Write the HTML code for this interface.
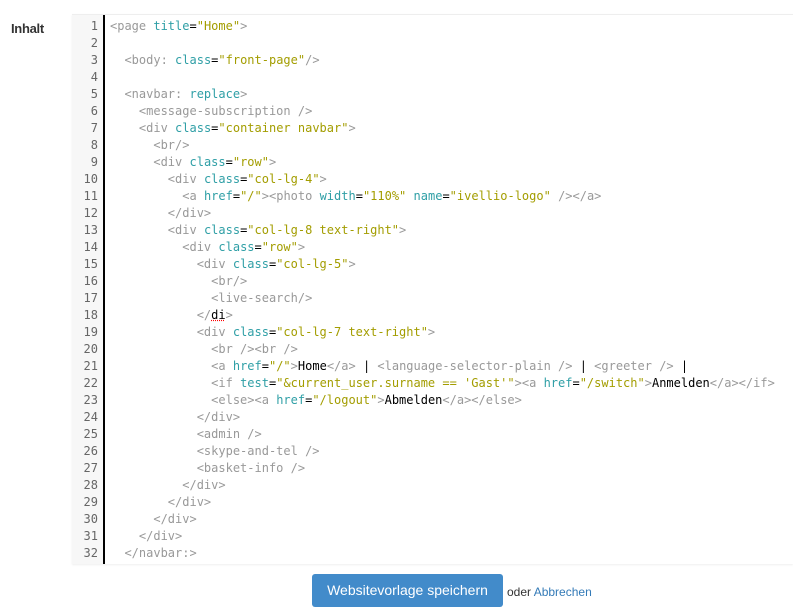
<!DOCTYPE html>
<html><head><meta charset="utf-8"><style>
body{margin:0;width:793px;height:612px;background:#fff;position:relative;overflow:hidden;font-family:"Liberation Sans",sans-serif}
.lbl{position:absolute;left:11px;top:21px;font-size:13px;color:#333;font-weight:bold;letter-spacing:-0.3px}
.ed{position:absolute;left:72px;top:14px;right:0;height:549px;background:#fff;border-top:1px solid #eee;box-shadow:0 1px 2px #eee}
.gut{position:absolute;left:0;top:0;width:31px;height:549px;background:#f7f7f7;border-right:2px solid #000}
.ln{position:absolute;left:0;width:26px;text-align:right;font:12px/17px "DejaVu Sans Mono",monospace;color:#666}
pre{margin:0;position:absolute;left:38px;top:3px;font:12px/17px "DejaVu Sans Mono",monospace;color:#000}
.t{color:#999}.a{color:#2f9fa6}.s{color:#a39d00}
.sq{text-decoration:underline dotted red}
.btn{position:absolute;left:312px;top:574px;width:191px;height:33px;background:#428bca;border-radius:3px;color:#fff;font-size:14px;line-height:33px;text-align:center}
.oder{position:absolute;left:507px;top:585px;font-size:12px;color:#333}
.oder span{color:#337ab7}
</style></head><body>
<div class="lbl">Inhalt</div>
<div class="ed"><div class="gut"></div>
<div class="ln" style="top:3px">1<br>2<br>3<br>4<br>5<br>6<br>7<br>8<br>9<br>10<br>11<br>12<br>13<br>14<br>15<br>16<br>17<br>18<br>19<br>20<br>21<br>22<br>23<br>24<br>25<br>26<br>27<br>28<br>29<br>30<br>31<br>32</div>
<pre><span class="t">&lt;page</span> <span class="a">title</span>=<span class="s">"Home"</span><span class="t">&gt;</span>

  <span class="t">&lt;body:</span> <span class="a">class</span>=<span class="s">"front-page"</span><span class="t">/&gt;</span>

  <span class="t">&lt;navbar:</span> <span class="a">replace</span><span class="t">&gt;</span>
    <span class="t">&lt;message-subscription /&gt;</span>
    <span class="t">&lt;div</span> <span class="a">class</span>=<span class="s">"container navbar"</span><span class="t">&gt;</span>
      <span class="t">&lt;br/&gt;</span>
      <span class="t">&lt;div</span> <span class="a">class</span>=<span class="s">"row"</span><span class="t">&gt;</span>
        <span class="t">&lt;div</span> <span class="a">class</span>=<span class="s">"col-lg-4"</span><span class="t">&gt;</span>
          <span class="t">&lt;a</span> <span class="a">href</span>=<span class="s">"/"</span><span class="t">&gt;&lt;photo</span> <span class="a">width</span>=<span class="s">"110%"</span> <span class="a">name</span>=<span class="s">"ivellio-logo"</span> <span class="t">/&gt;&lt;/a&gt;</span>
        <span class="t">&lt;/div&gt;</span>
        <span class="t">&lt;div</span> <span class="a">class</span>=<span class="s">"col-lg-8 text-right"</span><span class="t">&gt;</span>
          <span class="t">&lt;div</span> <span class="a">class</span>=<span class="s">"row"</span><span class="t">&gt;</span>
            <span class="t">&lt;div</span> <span class="a">class</span>=<span class="s">"col-lg-5"</span><span class="t">&gt;</span>
              <span class="t">&lt;br/&gt;</span>
              <span class="t">&lt;live-search/&gt;</span>
            <span class="t">&lt;/</span><span class="sq">di</span><span class="t">&gt;</span>
            <span class="t">&lt;div</span> <span class="a">class</span>=<span class="s">"col-lg-7 text-right"</span><span class="t">&gt;</span>
              <span class="t">&lt;br /&gt;&lt;br /&gt;</span>
              <span class="t">&lt;a</span> <span class="a">href</span>=<span class="s">"/"</span><span class="t">&gt;</span>Home<span class="t">&lt;/a&gt;</span> | <span class="t">&lt;language-selector-plain /&gt;</span> | <span class="t">&lt;greeter /&gt;</span> |
              <span class="t">&lt;if</span> <span class="a">test</span>=<span class="s">"&amp;current_user.surname == 'Gast'"</span><span class="t">&gt;&lt;a</span> <span class="a">href</span>=<span class="s">"/switch"</span><span class="t">&gt;</span>Anmelden<span class="t">&lt;/a&gt;&lt;/if&gt;</span>
              <span class="t">&lt;else&gt;&lt;a</span> <span class="a">href</span>=<span class="s">"/logout"</span><span class="t">&gt;</span>Abmelden<span class="t">&lt;/a&gt;&lt;/else&gt;</span>
            <span class="t">&lt;/div&gt;</span>
            <span class="t">&lt;admin /&gt;</span>
            <span class="t">&lt;skype-and-tel /&gt;</span>
            <span class="t">&lt;basket-info /&gt;</span>
          <span class="t">&lt;/div&gt;</span>
        <span class="t">&lt;/div&gt;</span>
      <span class="t">&lt;/div&gt;</span>
    <span class="t">&lt;/div&gt;</span>
  <span class="t">&lt;/navbar:&gt;</span></pre>
</div>
<div class="btn">Websitevorlage speichern</div>
<div class="oder">oder <span>Abbrechen</span></div>
</body></html>
